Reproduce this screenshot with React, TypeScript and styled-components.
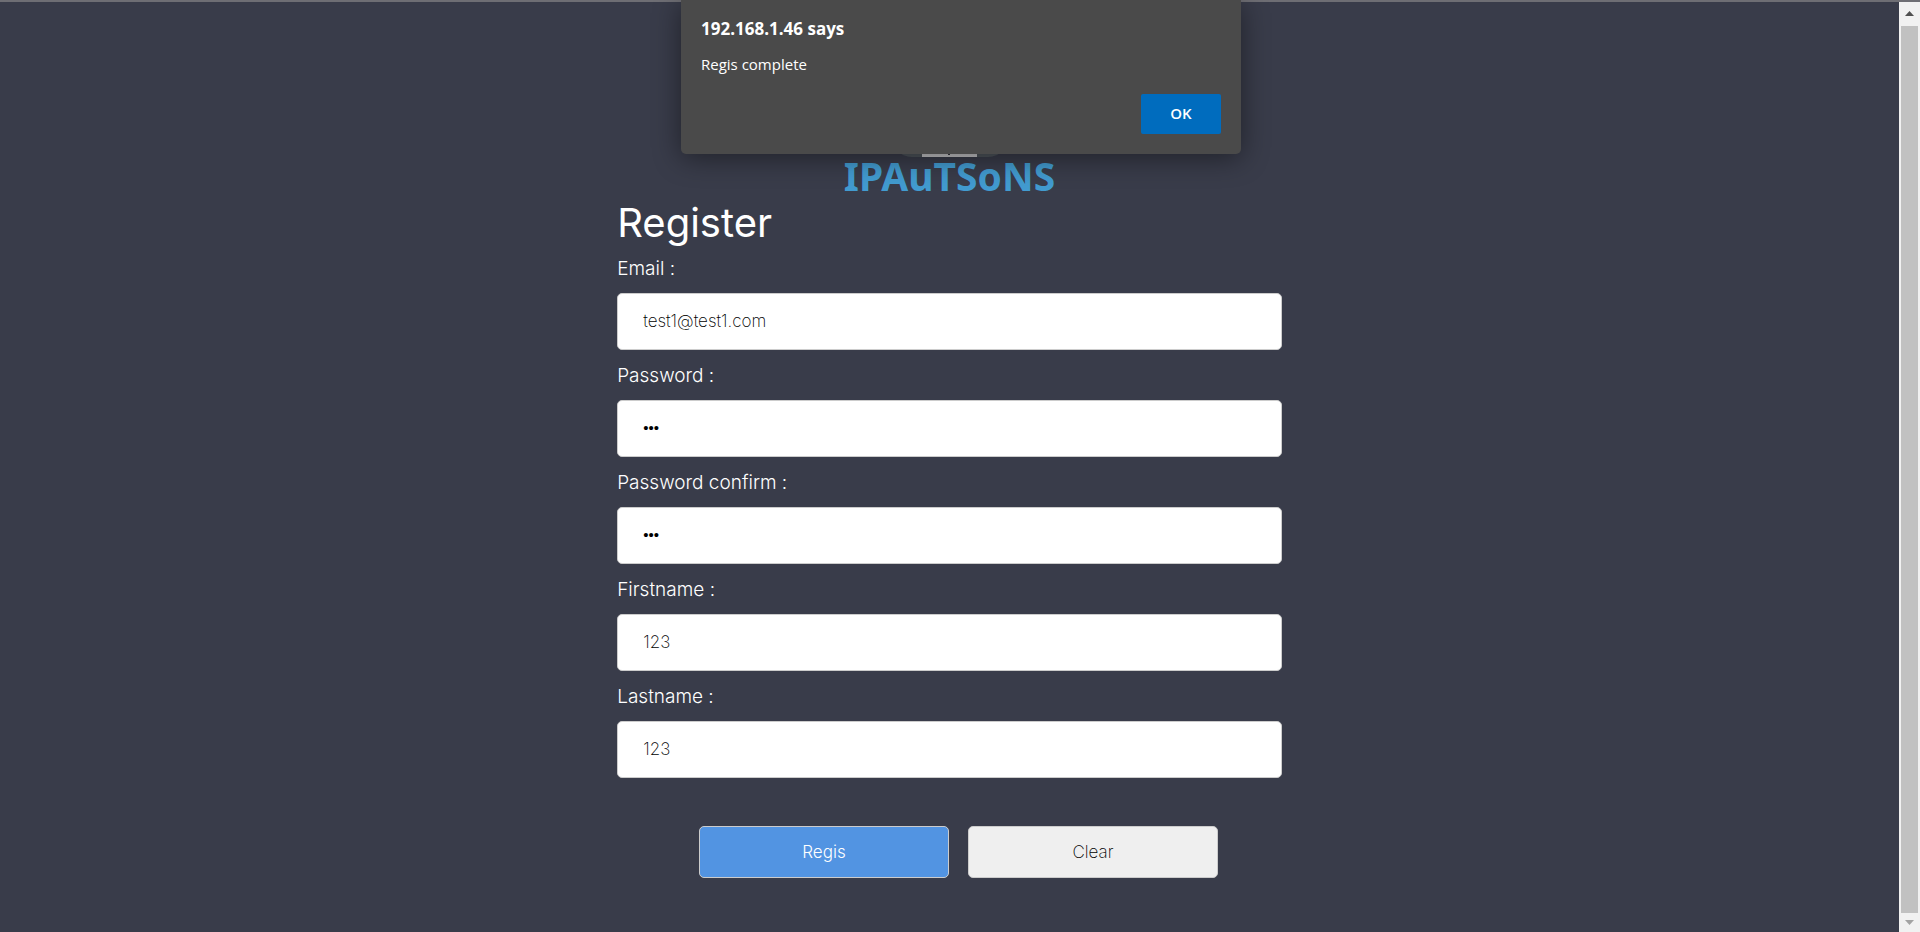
import React, { useState } from "react";
import styled, { createGlobalStyle } from "styled-components";

const GlobalStyle = createGlobalStyle`
  *, *::before, *::after { box-sizing: border-box; }
  html, body { margin: 0; }
  body {
    background: #393c4a;
    color: #fff;
    font-family: Inter, "Open Sans", sans-serif;
    font-weight: 300;
  }
`;

const Shell = styled.div`
  display: flex;
  min-height: 100vh;
  border-top: 2px solid #6e6e74;
`;

const Page = styled.main`
  flex: 1;
  display: flex;
  flex-direction: column;
  align-items: center;
  padding-top: 55px;
`;

const Brand = styled.div`
  display: flex;
  flex-direction: column;
  align-items: center;
`;

const BrandMark = styled.svg`
  display: block;
  width: 120px;
  height: 100px;
`;

const BrandName = styled.span`
  font: 700 39px/38px "Noto Sans", sans-serif;
  color: #429bd0;
`;

const Form = styled.form`
  width: 35%;
`;

const Title = styled.h1`
  margin: 0 0 3px;
  font-size: 40px;
  line-height: 56px;
  font-weight: 400;
`;

const Field = styled.div`
  display: flex;
  flex-direction: column;
  margin-bottom: 11px;
`;

const Label = styled.label`
  font-size: 19px;
  line-height: 30px;
  margin-bottom: 9px;
`;

const Input = styled.input`
  height: 57px;
  padding: 0 25px 2px;
  border: 1px solid #ccc;
  border-radius: 5px;
  background: #fff;
  color: #000;
  font: 200 17px/24px Inter, "Open Sans", sans-serif;
  outline: none;

  &[type="password"] {
    font: 400 15px/24px "Liberation Sans", sans-serif;
  }
`;

const Actions = styled.div`
  display: flex;
  justify-content: center;
  gap: 19px;
  margin: 48px 0 54px 18px;
`;

const Button = styled.button<{ $primary?: boolean }>`
  width: 250px;
  height: 52px;
  border: 1px solid #ccc;
  border-radius: 5px;
  background: ${(p) => (p.$primary ? "#5294e2" : "#efefef")};
  color: ${(p) => (p.$primary ? "#fff" : "#000")};
  font: ${(p) => (p.$primary ? 300 : 200)} 17px/24px Inter, "Open Sans", sans-serif;
`;

const Dialog = styled.div`
  position: absolute;
  top: 0;
  left: 50%;
  width: 560px;
  margin-left: -279px;
  padding: 17px 20px 20px;
  display: flex;
  flex-direction: column;
  border-radius: 0 0 5px 5px;
  background: #4a4a4a;
  box-shadow: 0 4px 28px rgba(0, 0, 0, 0.45);
  font-family: "Open Sans", sans-serif;
  font-weight: 400;
`;

const DialogTitle = styled.h2`
  margin: 0 0 11px;
  font-size: 17px;
  line-height: 24px;
  font-weight: 700;
`;

const DialogText = styled.p`
  margin: 0 0 18px;
  font-size: 15px;
  line-height: 24px;
`;

const DialogButton = styled.button`
  align-self: flex-end;
  width: 80px;
  height: 40px;
  padding: 0 0 2px;
  border: 0;
  border-radius: 2px;
  background: #006cbe;
  color: #fff;
  font: 600 15px/20px "Open Sans", sans-serif;
`;

const Scrollbar = styled.div`
  width: 21px;
  display: flex;
  flex-direction: column;
  padding: 0 2px;
  background: #f1f1f1;
`;

const Arrow = styled.svg<{ $height: number }>`
  display: block;
  width: 17px;
  height: ${(p) => p.$height}px;
`;

const Thumb = styled.div`
  flex: 1;
  background: #c1c1c1;
`;

const fields = [
  { id: "email", label: "Email :", type: "text", value: "test1@test1.com" },
  { id: "password", label: "Password :", type: "password", value: "123" },
  { id: "confirm", label: "Password confirm :", type: "password", value: "123" },
  { id: "firstname", label: "Firstname :", type: "text", value: "123" },
  { id: "lastname", label: "Lastname :", type: "text", value: "123" },
];

export default function App() {
  const [open, setOpen] = useState(true);
  return (
    <>
      <GlobalStyle />
      <Shell>
        <Page>
          <Brand>
            <BrandMark viewBox="0 0 120 100" aria-hidden="true">
              <rect width="120" height="100" rx="22" fill="#4d545b" />
              <rect x="32" y="20" width="55" height="80" fill="#c4c4c7" />
              <path d="M59 60v38" stroke="#33353d" strokeWidth="2" />
            </BrandMark>
            <BrandName>IPAuTSoNS</BrandName>
          </Brand>
          <Form onSubmit={(e) => e.preventDefault()}>
            <Title>Register</Title>
            {fields.map((f) => (
              <Field key={f.id}>
                <Label htmlFor={f.id}>{f.label}</Label>
                <Input id={f.id} type={f.type} defaultValue={f.value} />
              </Field>
            ))}
            <Actions>
              <Button $primary type="submit">Regis</Button>
              <Button type="reset">Clear</Button>
            </Actions>
          </Form>
        </Page>
        <Scrollbar aria-hidden="true">
          <Arrow $height={24} viewBox="0 0 17 24"><path d="M4 14l4.5-5 4.5 5z" fill="#505050" /></Arrow>
          <Thumb />
          <Arrow $height={19} viewBox="0 0 17 19"><path d="M4 7l4.5 5 4.5-5z" fill="#a3a3a3" /></Arrow>
        </Scrollbar>
      </Shell>
      {open && (
        <Dialog role="alertdialog" aria-labelledby="alert-title">
          <DialogTitle id="alert-title">192.168.1.46 says</DialogTitle>
          <DialogText>Regis complete</DialogText>
          <DialogButton onClick={() => setOpen(false)}>OK</DialogButton>
        </Dialog>
      )}
    </>
  );
}
